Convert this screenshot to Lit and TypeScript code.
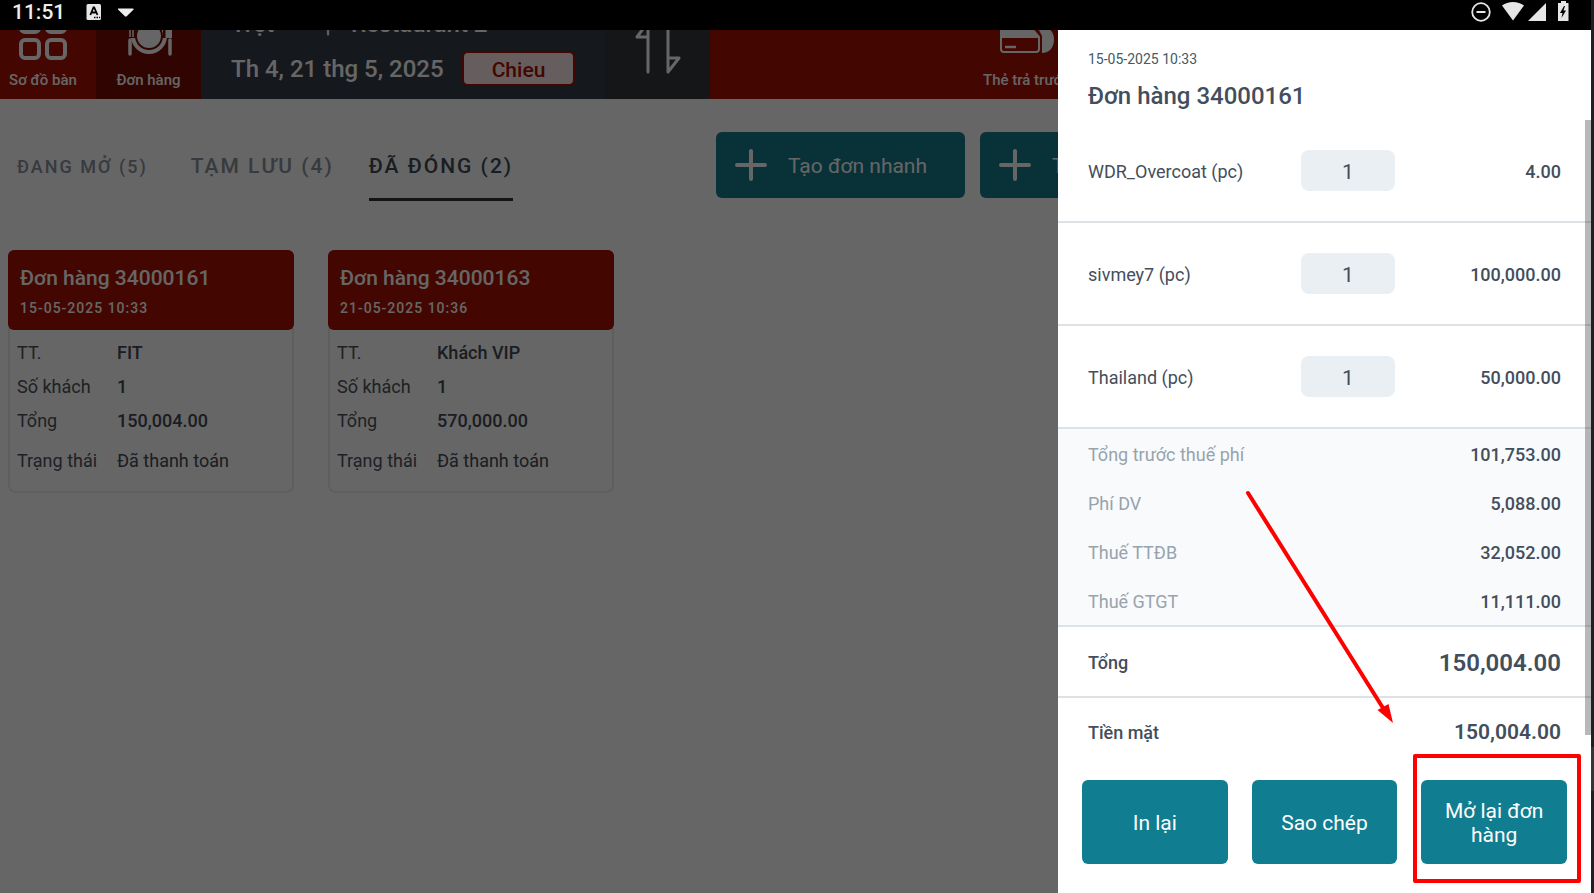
import { LitElement, html, svg, css } from "lit";
import { customElement, property } from "lit/decorators.js";

interface Order {
  code: string;
  time: string;
  type: string;
  guests: string;
  total: string;
  status: string;
}

const ORDERS: Order[] = [
  { code: "34000161", time: "15-05-2025 10:33", type: "FIT", guests: "1", total: "150,004.00", status: "Đã thanh toán" },
  { code: "34000163", time: "21-05-2025 10:36", type: "Khách VIP", guests: "1", total: "570,000.00", status: "Đã thanh toán" },
];

const ITEMS = [
  { name: "WDR_Overcoat (pc)", qty: 1, price: "4.00" },
  { name: "sivmey7 (pc)", qty: 1, price: "100,000.00" },
  { name: "Thailand (pc)", qty: 1, price: "50,000.00" },
];

const FEES = [
  ["Tổng trước thuế phí", "101,753.00"],
  ["Phí DV", "5,088.00"],
  ["Thuế TTĐB", "32,052.00"],
  ["Thuế GTGT", "11,111.00"],
];

const plus = svg`<svg width="34" height="34" viewBox="0 0 34 34" fill="none" stroke="#fff" stroke-width="4" stroke-linecap="round" aria-hidden="true"><path d="M17 3v28M3 17h28"/></svg>`;

@customElement("status-bar")
class StatusBar extends LitElement {
  static styles = css`
    :host { display: flex; align-items: center; justify-content: space-between; height: 30px; padding: 0 22px 6px 12px; box-sizing: border-box; background: #000; color: #eee; }
    .side { display: flex; align-items: center; }
    .time { font-size: 21px; line-height: 24px; font-weight: 500; margin-right: 21px; }
    .keyboard { margin-right: 15px; }
    svg { display: block; }
  `;
  render() {
    return html`
      <div class="side">
        <span class="time">11:51</span>
        <svg class="keyboard" width="16" height="18" viewBox="0 0 16 18" aria-hidden="true">
          <rect x="0.500" y="1" width="14.500" height="16" rx="1.500" fill="#e6e6e6" />
          <path d="M4.300 12 7.500 4.500h.7L11.500 12M5.500 9.500h4.800" fill="none" stroke="#000" stroke-width="1.800" />
          <path d="M8 14.500h1.500M10.500 14.500H12M13 14.500h1.200" stroke="#000" stroke-width="1.400" />
        </svg>
        <svg width="18" height="18" viewBox="0 0 18 18" aria-hidden="true"><path d="M1.500 5.500h14.500c.8 0 .8.800.4 1.200L9.700 13.300a1.300 1.300 0 0 1-1.800 0L1.200 6.700c-.5-.5-.3-1.200.3-1.200z" fill="#eee" /></svg>
      </div>
      <div class="side">
        <svg width="98" height="24" viewBox="0 0 98 24" aria-hidden="true">
          <circle cx="10" cy="12" r="8.800" fill="none" stroke="#e6e6e6" stroke-width="1.800" />
          <path d="M5.500 12h9" stroke="#e6e6e6" stroke-width="2" />
          <path d="M31 5.500C37 .800 47 .800 53 5.500L42 20.500z" fill="#e6e6e6" />
          <path d="M75 3v18H57z" fill="#e6e6e6" />
          <path d="M90 1h5v2h2.500v18H87V3h3z" fill="#e6e6e6" />
          <path d="M93 6l-4 7h2.500l-1 5 4.500-7.500h-2.500L94 6z" fill="#000" />
        </svg>
      </div>
    `;
  }
}

@customElement("app-header")
class AppHeader extends LitElement {
  static styles = css`
    :host { display: flex; height: 69px; overflow: hidden; background: #a80f00; color: #fff; }
    button { font: inherit; color: inherit; border: 0; padding: 0; background: none; }
    .nav { display: flex; flex-direction: column; align-items: center; justify-content: flex-end; gap: 10px; padding-bottom: 9px; box-sizing: border-box; font-size: 15px; line-height: 20px; font-weight: 500; white-space: nowrap; }
    .tables { width: 96px; padding-right: 10px; }
    .orders { width: 105px; background: #780c00; }
    .info { width: 404px; box-sizing: border-box; padding: 0 30px 13px; display: flex; flex-direction: column; justify-content: flex-end; gap: 13px; background: #353c48; font-size: 24px; font-weight: 500; white-space: nowrap; }
    .place, .shift { display: flex; align-items: center; }
    .place { gap: 20px; line-height: 28px; }
    .area { width: 74px; }
    .shift { justify-content: space-between; line-height: 35px; }
    .shift span { padding-top: 2px; line-height: 33px; }
    .shift button { box-sizing: border-box; width: 113px; height: 35px; border: 2px solid #a80f00; border-radius: 6px; background: #ffebeb; color: #a80f00; font-size: 21px; line-height: 30px; padding-top: 2px; }
    .swap { width: 105px; background: #35373a; display: flex; justify-content: center; align-items: flex-end; padding-bottom: 25px; box-sizing: border-box; }
    .fill { width: 263px; }
    .card { padding-left: 10px; }
    svg { display: block; flex-shrink: 0; }
  `;
  render() {
    return html`
      <button class="nav tables">
        <svg width="48" height="48" viewBox="0 0 48 48" fill="none" stroke="#fff" stroke-width="4" aria-hidden="true">
          <rect x="2" y="2" width="18" height="18" rx="4" /><rect x="28" y="2" width="18" height="18" rx="4" />
          <rect x="2" y="28" width="18" height="18" rx="4" /><rect x="28" y="28" width="18" height="18" rx="4" />
        </svg>
        Sơ đồ bàn
      </button>
      <button class="nav orders">
        <svg width="46" height="46" viewBox="0 0 46 46" fill="none" stroke="#fff" aria-hidden="true">
          <circle cx="23" cy="22" r="12" fill="#fff" stroke="none" />
          <circle cx="23" cy="22" r="16" stroke-width="4" />
          <path d="M0 6h10v18H0zM37 6h9v18h-9z" fill="#780c00" stroke="none" />
          <path d="M4 6v17M7 6v17" stroke-width="1.500" />
          <path d="M4 26v14M44 26v14" stroke-width="3.500" stroke-linecap="round" />
          <path d="M39.500 6h6.500v18h-6.500z" fill="#fff" stroke="none" />
        </svg>
        Đơn hàng
      </button>
      <div class="info">
        <div class="place"><span class="area">Trệt</span><span>|</span><span>Restaurant 2</span></div>
        <div class="shift"><span>Th 4, 21 thg 5, 2025</span><button>Chieu</button></div>
      </div>
      <button class="swap" aria-label="Đổi">
        <svg width="46" height="56" viewBox="0 0 46 56" fill="none" stroke="#fff" stroke-width="3" stroke-linecap="round" stroke-linejoin="round" aria-hidden="true">
          <path d="M13 54V4L2 19h11M33 2v52l11-14H33" />
        </svg>
      </button>
      <div class="fill"></div>
      <button class="nav card">
        <svg width="56" height="42" viewBox="0 0 56 42" fill="none" stroke="#fff" stroke-width="2" stroke-linejoin="round" aria-hidden="true">
          <path d="M2 12v19a3 3 0 0 0 3 3h32a3 3 0 0 0 3-3V19l-6-7" />
          <path d="M2 12h31l6 7H2z" fill="#fff" />
          <path d="M6 29h11" stroke-width="2.500" />
          <path d="M38 8c11 0 17 5 17 13 0 9-5 14-12 14V18z" fill="#fff" stroke="none" />
        </svg>
        Thẻ trả trước
      </button>
    `;
  }
}

@customElement("order-card")
class OrderCard extends LitElement {
  @property({ attribute: false }) order!: Order;
  static styles = css`
    :host { display: block; }
    .card { border-radius: 8px; box-shadow: inset 0 0 0 2px #e8eaec; }
    .head { padding: 14px 12px; height: 80px; box-sizing: border-box; border-radius: 6px; background: #a80f00; color: #fff; font-weight: 500; }
    .title { margin: 0; font-size: 21px; line-height: 28px; font-weight: 500; }
    .time { font-size: 14px; line-height: 32px; letter-spacing: 1px; }
    .rows { display: grid; grid-template-columns: 100px 1fr; margin: 0; padding: 6px 9px 10px; font-size: 18px; line-height: 34px; color: #4b535d; }
    dt, dd { margin: 0; white-space: nowrap; }
    dd { font-weight: 500; color: #414a56; }
    .last { padding-top: 6px; font-weight: 400; padding-bottom: 5px; }
  `;
  render() {
    const o = this.order;
    return html`
      <article class="card">
        <header class="head">
          <h2 class="title">Đơn hàng ${o.code}</h2>
          <div class="time">${o.time}</div>
        </header>
        <dl class="rows">
          <dt>TT.</dt><dd>${o.type}</dd>
          <dt>Số khách</dt><dd>${o.guests}</dd>
          <dt>Tổng</dt><dd>${o.total}</dd>
          <dt class="last">Trạng thái</dt><dd class="last">${o.status}</dd>
        </dl>
      </article>
    `;
  }
}

@customElement("order-panel")
class OrderPanel extends LitElement {
  static styles = css`
    :host { display: flex; flex-direction: column; background: #fff; color: #434e5c; }
    .head { padding: 19px 30px 0; height: 90px; box-sizing: border-box; }
    .date { font-size: 14px; line-height: 20px; color: #455a64; }
    .title { margin: 11px 0 0; font-size: 24px; line-height: 32px; font-weight: 500; }
    .body { flex: 1; min-height: 0; overflow: hidden; }
    .row { display: flex; justify-content: space-between; align-items: center; padding: 0 30px; box-sizing: border-box; font-size: 18px; white-space: nowrap; }
    .row span { padding-top: 2px; }
    .item { display: grid; grid-template-columns: 213px 94px 1fr; height: 103px; border-bottom: 2px solid #dde2e7; }
    .qty { width: 94px; height: 41px; box-sizing: border-box; border: 0; border-radius: 8px; background: #eaeff3; color: inherit; font: inherit; font-size: 21px; text-align: center; padding: 2px 0 0; outline: none; }
    .amount { font-weight: 500; text-align: right; }
    .fees { background: #f9fafc; border-bottom: 2px solid #dde2e7; }
    .fee { height: 49px; }
    .fee .label { color: #97a3ad; }
    .total { height: 71px; border-bottom: 2px solid #dde2e7; font-weight: 500; }
    .total .amount { font-size: 24px; font-weight: 600; }
    .cash { height: 66px; font-weight: 500; }
    .cash .amount { font-size: 21px; font-weight: 600; }
    .actions { display: grid; grid-template-columns: repeat(3, 1fr); gap: 24px; padding: 0 24px 29px; }
    .slot { position: relative; display: grid; }
    .action { height: 84px; border: 0; border-radius: 6px; background: #117d90; color: #fff; font: inherit; font-size: 21px; line-height: 24px; padding: 2px 16px 0; }
    .thumb { position: absolute; top: 90px; right: 0; width: 6px; height: 615px; background: rgba(0, 0, 0, 0.28); }
    .frame { position: absolute; inset: -26px -14px -19px -8px; border: 4px solid #f00; border-radius: 2px; pointer-events: none; }
    .arrow { position: absolute; top: 458px; right: 194px; pointer-events: none; }
  `;
  render() {
    return html`
      <header class="head">
        <div class="date">15-05-2025 10:33</div>
        <h1 class="title">Đơn hàng 34000161</h1>
      </header>
      <div class="body">
        ${ITEMS.map(
          (i) => html`<label class="row item">
            <span>${i.name}</span>
            <input class="qty" type="text" inputmode="numeric" .value=${String(i.qty)} />
            <span class="amount">${i.price}</span>
          </label>`
        )}
        <div class="fees">
          ${FEES.map(([label, amount]) => html`<div class="row fee"><span class="label">${label}</span><span class="amount">${amount}</span></div>`)}
        </div>
        <div class="row total"><span>Tổng</span><span class="amount">150,004.00</span></div>
        <div class="row cash"><span>Tiền mặt</span><span class="amount">150,004.00</span></div>
      </div>
      <footer class="actions">
        <div class="slot"><button class="action">In lại</button></div>
        <div class="slot"><button class="action">Sao chép</button></div>
        <div class="slot"><button class="action">Mở lại đơn hàng</button><div class="frame"></div></div>
      </footer>
      <div class="thumb"></div>
      <svg class="arrow" width="152" height="240" viewBox="0 0 152 240" aria-hidden="true">
        <path d="M3 5 138 220" stroke="#f00" stroke-width="4" stroke-linecap="round" />
        <path d="M148 235 132.500 222 143.500 216z" fill="#f00" />
      </svg>
    `;
  }
}

@customElement("app-root")
class AppRoot extends LitElement {
  static styles = css`
    :host { display: flex; height: 100vh; overflow: hidden; font-family: Roboto, "Noto Sans", sans-serif; background: #1e1f28; }
    .device { position: relative; flex: 1; min-width: 0; display: flex; flex-direction: column; background: #fff; }
    .edge { width: 3px; display: flex; align-items: flex-end; }
    .edge-mark { width: 3px; height: 44px; margin-bottom: 102px; background: #34343a; }
    .stage { position: relative; flex: 1; min-height: 0; overflow: hidden; }
    .toolbar { display: flex; align-items: flex-start; padding-top: 33px; }
    .tabs { flex: 0 0 45%; display: flex; box-sizing: border-box; padding-left: 17px; gap: 35px; }
    .tab { border: 0; border-bottom: 3px solid transparent; background: none; padding: 2px 0 0; height: 69px; font: inherit; font-weight: 500; font-size: 21px; letter-spacing: 2px; color: #8b929b; white-space: nowrap; }
    .small { font-size: 18px; margin-right: 8px; }
    .active { color: #414a56; border-bottom-color: #333; }
    .creates { display: flex; gap: 15px; }
    .create { display: flex; align-items: center; gap: 20px; height: 66px; width: 249px; padding: 0 18px; border: 0; border-radius: 6px; background: #147d8c; color: #fff; font: inherit; font-size: 21px; white-space: nowrap; }
    .create span { padding-top: 2px; }
    .cards { display: grid; grid-template-columns: repeat(auto-fill, 286px); gap: 34px; padding: 49px 8px 0; }
    .scrim { position: absolute; inset: 0; background: rgba(0, 0, 0, 0.6); }
    .panel { position: absolute; top: 0; right: 0; bottom: 0; width: 533px; }
  `;
  render() {
    return html`
      <div class="device">
        <status-bar></status-bar>
        <div class="stage">
          <app-header></app-header>
          <main>
            <div class="toolbar">
              <nav class="tabs">
                <button class="tab small">ĐANG MỞ (5)</button>
                <button class="tab">TẠM LƯU (4)</button>
                <button class="tab active">ĐÃ ĐÓNG (2)</button>
              </nav>
              <div class="creates">
                <button class="create">${plus}<span>Tạo đơn nhanh</span></button>
                <button class="create">${plus}<span>Tạo đơn</span></button>
              </div>
            </div>
            <section class="cards">${ORDERS.map((o) => html`<order-card .order=${o}></order-card>`)}</section>
          </main>
          <div class="scrim"></div>
          <order-panel class="panel"></order-panel>
        </div>
      </div>
      <div class="edge"><div class="edge-mark"></div></div>
    `;
  }
}
